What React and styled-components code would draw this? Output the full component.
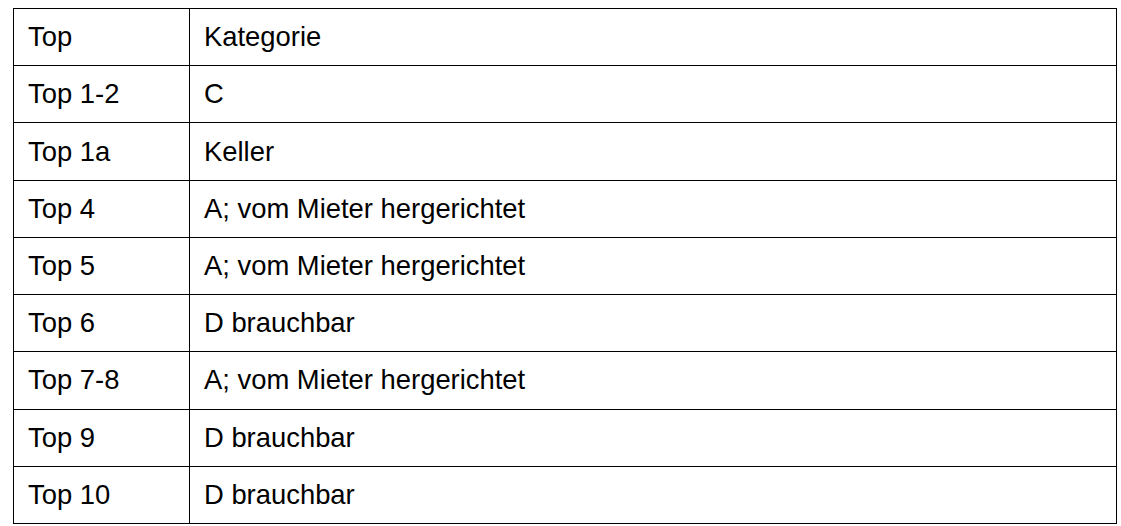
import React from 'react';
import styled, { createGlobalStyle } from 'styled-components';

const GlobalStyle = createGlobalStyle`
  html, body {
    margin: 0;
    padding: 0;
    background: #ffffff;
  }
`

const Page = styled.div`
  padding: 8px 0 0 13px;
  width: 1121px;
  height: 526px;
  box-sizing: border-box;
  overflow: hidden;
`

const Table = styled.table`
  border-collapse: collapse;
  width: 1104px;
  table-layout: fixed;
  font-family: "Liberation Sans", Arial, sans-serif;
  font-size: 27.4px;
  color: #000;
`

const Row = styled.tr`
  height: 57.22px;
`

const Cell = styled.td`
  border: 1px solid #000;
  padding: 0 0 0 ${p => p.$pad}px;
  vertical-align: middle;
  white-space: nowrap;
  width: ${p => p.$w || 'auto'};
`

const rows = [
  ['Top', 'Kategorie'],
  ['Top 1-2', 'C'],
  ['Top 1a', 'Keller'],
  ['Top 4', 'A; vom Mieter hergerichtet'],
  ['Top 5', 'A; vom Mieter hergerichtet'],
  ['Top 6', 'D brauchbar'],
  ['Top 7-8', 'A; vom Mieter hergerichtet'],
  ['Top 9', 'D brauchbar'],
  ['Top 10', 'D brauchbar'],
]

const App = () => {
  return (
    <Page>
      <GlobalStyle />
      <Table>
        <tbody>
          {rows.map(([top, kat]) => (
            <Row key={top}>
              <Cell $pad={14} $w="161px">{top}</Cell>
              <Cell $pad={14}>{kat}</Cell>
            </Row>
          ))}
        </tbody>
      </Table>
    </Page>
  )
}

export default App
